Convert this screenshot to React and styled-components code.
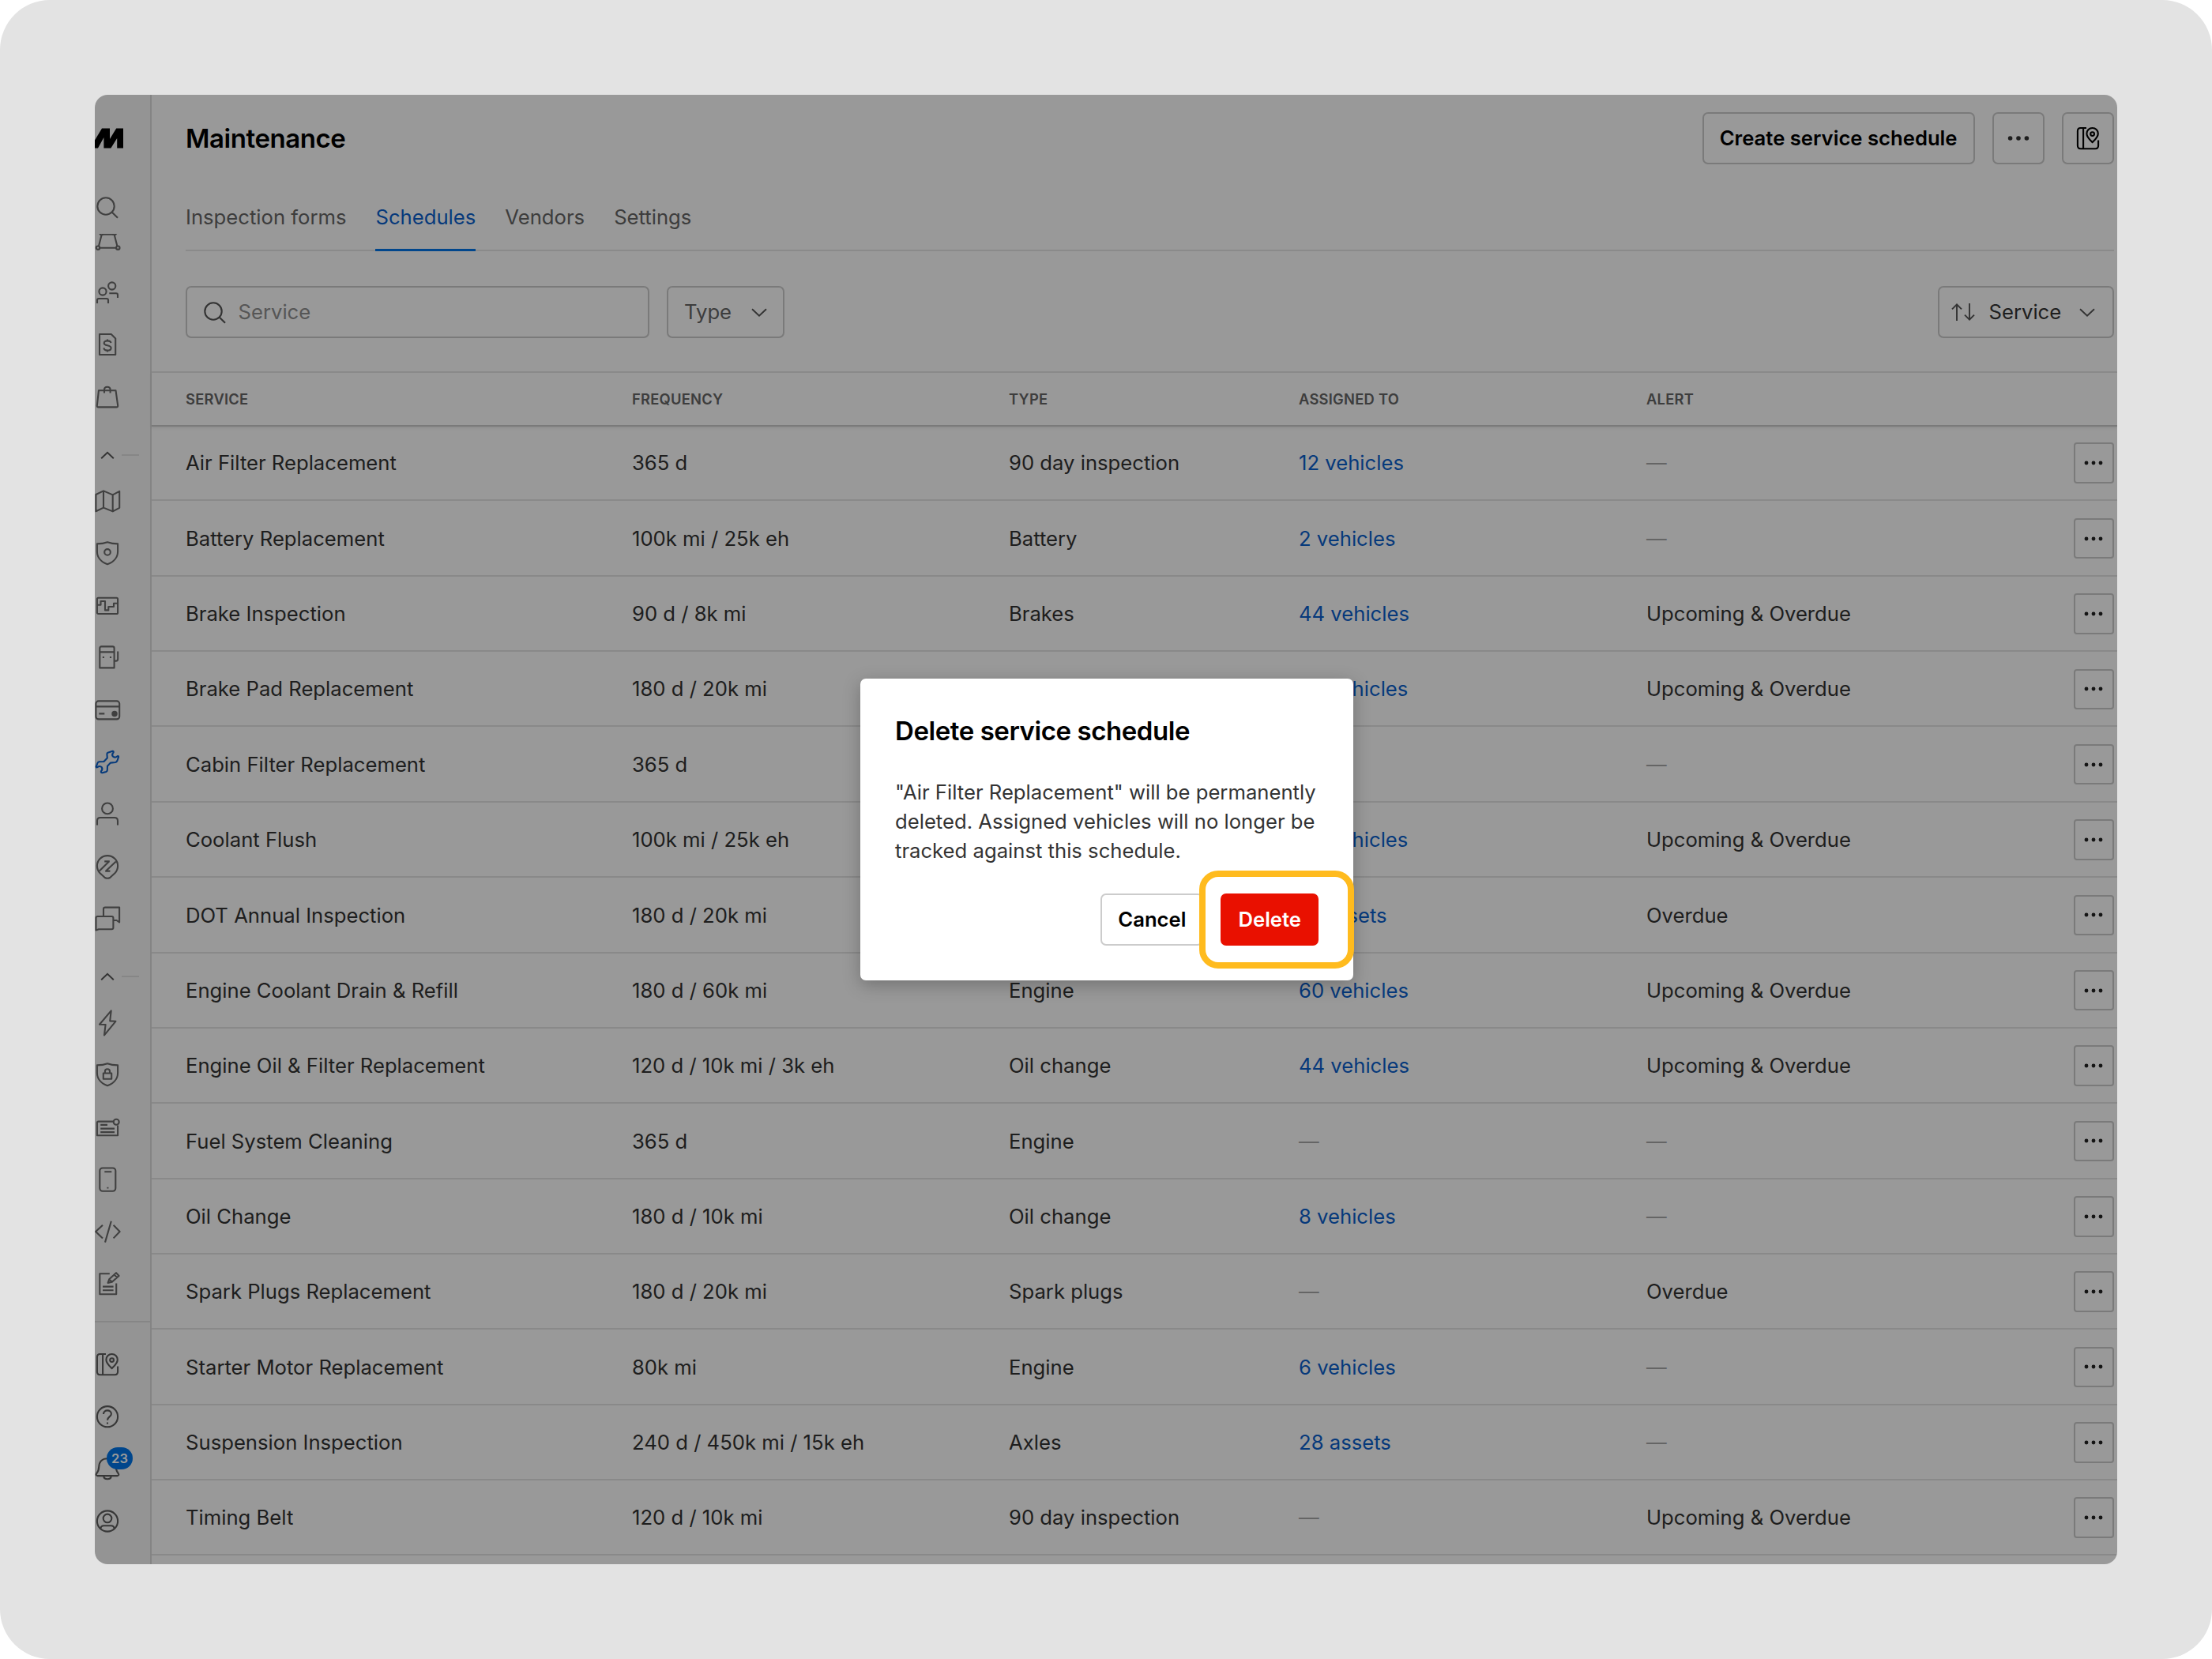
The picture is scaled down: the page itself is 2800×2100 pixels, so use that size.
import React from 'react';
import styled, { createGlobalStyle } from 'styled-components';

const dash = '—';

const tabs = ['Inspection forms', 'Schedules', 'Vendors', 'Settings'];

const columns = ['Service', 'Frequency', 'Type', 'Assigned to', 'Alert'];

const schedules = [
  { service: 'Air Filter Replacement', frequency: '365 d', type: '90 day inspection', assigned: '12 vehicles' },
  { service: 'Battery Replacement', frequency: '100k mi / 25k eh', type: 'Battery', assigned: '2 vehicles' },
  { service: 'Brake Inspection', frequency: '90 d / 8k mi', type: 'Brakes', assigned: '44 vehicles', alert: 'Upcoming & Overdue' },
  { service: 'Brake Pad Replacement', frequency: '180 d / 20k mi', type: 'Brakes', assigned: '28 vehicles', alert: 'Upcoming & Overdue' },
  { service: 'Cabin Filter Replacement', frequency: '365 d', type: 'Engine' },
  { service: 'Coolant Flush', frequency: '100k mi / 25k eh', type: 'Engine', assigned: '28 vehicles', alert: 'Upcoming & Overdue' },
  { service: 'DOT Annual Inspection', frequency: '180 d / 20k mi', type: 'Inspection', assigned: '18 assets', alert: 'Overdue' },
  { service: 'Engine Coolant Drain & Refill', frequency: '180 d / 60k mi', type: 'Engine', assigned: '60 vehicles', alert: 'Upcoming & Overdue' },
  { service: 'Engine Oil & Filter Replacement', frequency: '120 d / 10k mi / 3k eh', type: 'Oil change', assigned: '44 vehicles', alert: 'Upcoming & Overdue' },
  { service: 'Fuel System Cleaning', frequency: '365 d', type: 'Engine' },
  { service: 'Oil Change', frequency: '180 d / 10k mi', type: 'Oil change', assigned: '8 vehicles' },
  { service: 'Spark Plugs Replacement', frequency: '180 d / 20k mi', type: 'Spark plugs', alert: 'Overdue' },
  { service: 'Starter Motor Replacement', frequency: '80k mi', type: 'Engine', assigned: '6 vehicles' },
  { service: 'Suspension Inspection', frequency: '240 d / 450k mi / 15k eh', type: 'Axles', assigned: '28 assets' },
  { service: 'Timing Belt', frequency: '120 d / 10k mi', type: '90 day inspection', alert: 'Upcoming & Overdue' },
];

const shieldPath = 'M18 4.3C13.5 6 9 6.4 4.9 6.4V16C4.9 23.5 10 29.5 18 32.2C26 29.5 31.1 23.5 31.1 16V6.4C27 6.4 22.5 6 18 4.3Z';

const icons = {
  search: <><circle cx="16" cy="17" r="10.7" /><path d="M23.6 24.6L31 31.8" /></>,
  geofence: (
    <>
      <circle cx="6" cy="27.7" r="2.2" /><circle cx="31.3" cy="27.7" r="2.2" />
      <circle cx="10.6" cy="8.8" r="2.4" /><circle cx="26.8" cy="8.8" r="2.4" />
      <path d="M8.2 27.7H29M7 25.4L10.6 11.4M30.4 25.4L26.8 11.4M12 10.6H25.4" />
    </>
  ),
  users: (
    <>
      <circle cx="12" cy="17" r="4.6" /><circle cx="23.7" cy="10" r="4.6" />
      <path d="M5 32V28Q5 26 7 26H17Q19 26 19 28V32M20.3 19.3H29Q31 19.3 31 21.3V25" />
    </>
  ),
  invoice: (
    <>
      <path d="M8 5H22.7L28.2 10.5V31H8Z" />
      <path d="M22.4 16.2C22.2 14.2 20.4 13.4 18 13.4S13.7 14.4 13.7 16.4C13.7 20.2 22.6 18.4 22.6 22.4C22.6 24.6 20.5 25.6 18 25.6S13.6 24.6 13.4 22.4M18 11.4V13.4M18 25.6V27.6" />
    </>
  ),
  bag: <path d="M7 10.2H28.5L31.2 29.5Q31.3 31.4 29.4 31.4H6.6Q4.7 31.4 4.8 29.5ZM14 13.6V9.4C14 4.6 21.6 4.6 21.6 9.4V13.6" />,
  map: <path d="M3.4 10L13 5.4L24.7 10.4L33.2 5.8V26.8L24.7 31.4L13 26.6L3.4 31.2ZM13 5.4V26.6M24.7 10.4V31.4" />,
  shield: <><path d={shieldPath} /><circle cx="18" cy="16.9" r="3.8" /></>,
  activity: (
    <>
      <rect x="4.9" y="8.7" width="26.2" height="20.3" rx="1.6" />
      <path d="M5 17.7H9.5V13H15V24.4H19.3V20H26V15.7H31" />
    </>
  ),
  fuel: (
    <>
      <path d="M8.3 31.4V6.4Q8.3 4.4 10.3 4.4H24.6Q26.6 4.4 26.6 6.4V31.4ZM8.3 11.4H26.6M31.2 10.4V20.2Q31.2 22.6 28.8 22.6H26.8" />
      <path d="M12.9 17V19M22 17V19" />
    </>
  ),
  card: (
    <>
      <rect x="3.4" y="7.4" width="29.8" height="23" rx="3.4" />
      <path d="M3.4 14.4H33.2M7.3 23.4H14.3" />
      <circle cx="27" cy="23.4" r="2.7" fill="currentColor" />
    </>
  ),
  wrench: (
    <path d="M24.5 4.8L18.5 6.8Q17.4 7.2 17.4 8.4L17.8 13.5L13.5 18L7.5 18.2Q6 18.4 5.4 20L3.7 24.6Q4 25.9 5.3 25.1Q8.5 22.8 10.8 25.3Q12.4 27.5 9.9 30.4Q9.6 32.4 11.5 32.3L16.2 31Q17.8 30.4 17.8 29L18 23.8L21.8 19.6L28 19Q29.6 18.8 30.4 17L32.1 12.2Q32.1 10.5 30.6 11.2Q27.4 14 24.9 11.6Q23 9.4 25.6 6.4Q26 4.6 24.5 4.8Z" />
  ),
  user: <><circle cx="18" cy="11.4" r="6.9" /><path d="M5 32.6V27Q5 23 9 23H27Q31 23 31 27V32.6" /></>,
  route: (
    <>
      <path d="M14.8 33L8.6 27.3A13.1 13.1 0 1 1 27.4 27.3L21.2 33Q18 34.6 14.8 33Z" />
      <path d="M7.8 24.6L20 12.4M16 24.4L28.8 12.4M14.2 12.4H20.8M15.2 24.6H21.4" />
    </>
  ),
  messages: (
    <>
      <path d="M13 15.6V6.6Q13 4.6 15 4.6H33.1V23.4L29.6 21H25.7" />
      <path d="M3.5 33.4V18Q3.5 16 5.5 16H23.4Q25.4 16 25.4 18V30.2Q25.4 32.2 23.4 32.2H7Z" />
    </>
  ),
  bolt: <path d="M22.7 3.4L21.2 16.4L28.4 16.8L14 34.4L15.6 21L8 20.7Z" />,
  shieldLock: (
    <>
      <path d={shieldPath} />
      <rect x="12.8" y="16.5" width="10.4" height="7.2" />
      <path d="M14.9 16.4V14.2C14.9 10.2 21 10.2 21 14.2V16.4" />
    </>
  ),
  news: (
    <>
      <path d="M25.6 11.6H6.6Q4.9 11.6 4.9 13.3V29.2H31.1V16.4" />
      <circle cx="29.2" cy="12.3" r="3.5" />
      <path d="M9.2 15.9H18M9.2 20.6H27M9.2 25.1H27" />
    </>
  ),
  phone: (
    <>
      <rect x="8.3" y="4.5" width="20" height="29.2" rx="3.6" />
      <path d="M14.3 9.2H23.3M18.4 28.8V30.6" />
    </>
  ),
  code: <path d="M12 10.7L3.2 19L12 27.4M22.8 5.8L15 32.6M25.6 10.7L33.6 19L25.6 27.4" />,
  form: (
    <>
      <path d="M20.8 6.2H8.3V32.2H29.2V18.6M12 22.6H25.6M12 27.3H25.6" />
      <path d="M18.6 17.9L20.2 13.3L29 5.2L32.6 8.9L23.8 16.8ZM20.2 13.3L23.8 16.8M26.6 7.4L30.2 11.2" />
    </>
  ),
  mapPin: (
    <>
      <path d="M16 5H8.6Q4.9 5 4.9 9V27.3Q4.9 31.2 8.8 31.2H27.2Q31.1 31.2 31.1 27.3V20.6M12.1 5V31.2" />
      <path d="M23.6 23.2C20 19.6 16.4 16.4 16.4 12.2A7.2 7.2 0 0 1 30.8 12.2C30.8 16.4 27.2 19.6 23.6 23.2Z" />
      <circle cx="23.6" cy="12.6" r="2.4" />
    </>
  ),
  help: (
    <>
      <circle cx="18" cy="18.2" r="13.1" />
      <path d="M13 15C13 8.9 22.9 8.9 22.9 14.8C22.9 18.2 18 18.2 18 22.8M18 25.5V27.4" />
    </>
  ),
  bell: <path d="M5.2 27.1Q2.8 26.4 4.2 24.2Q7 21 7.2 16C7.4 9 11.6 5.2 18 5.2S28.6 9 28.8 16Q29 21 31.8 24.2Q33.2 26.4 30.8 27.1ZM13.2 27.4C13.6 32.6 22.4 32.6 22.8 27.4" />,
  account: (
    <>
      <circle cx="18" cy="18.5" r="13.1" />
      <circle cx="18" cy="14.9" r="5.3" />
      <path d="M9.2 28.2C9.6 25 11 24.2 13.4 24.2H22.6C25 24.2 26.4 25 26.8 28.2" />
    </>
  ),
};

const Icon = ({ name }) => (
  <IconSvg viewBox="0 0 36 36">{icons[name]}</IconSvg>
);

const Chevron = ({ up }) => (
  <ChevronSvg viewBox="0 0 20 11">
    <path d={up ? 'M2.2 9.2L10 1.7L17.8 9.2' : 'M1 1.2L10 9.6L19 1.2'} />
  </ChevronSvg>
);

const Dots = ({ small }) => (
  <DotsSvg viewBox="0 0 30 6" $small={small}>
    <circle cx="4.6" cy="3" r="2.8" />
    <circle cx="15" cy="3" r="2.8" />
    <circle cx="25.4" cy="3" r="2.8" />
  </DotsSvg>
);

const NavGroup = ({ items, active }) => items.map(name => (
  <NavItem key={name} $active={name === active}><Icon name={name} /></NavItem>
));

function Sidebar() {
  return (
    <SidebarWrap>
      <Brand>
        <svg viewBox="0 0 44 26">
          <path d="M0 25.5L15 .5H25V14L33.2 .5H42V25.5H34.2V13L26.4 25.5H17.4V12L10 25.5Z" />
        </svg>
      </Brand>
      <NavItem><Icon name="search" /></NavItem>
      <NavScroll>
        <NavGroup items={['geofence', 'users', 'invoice', 'bag']} />
        <NavDivider><Chevron up /><hr /></NavDivider>
        <NavGroup
          items={['map', 'shield', 'activity', 'fuel', 'card', 'wrench', 'user', 'route', 'messages']}
          active="wrench"
        />
        <NavDivider><Chevron up /><hr /></NavDivider>
        <NavGroup items={['bolt', 'shieldLock', 'news', 'phone', 'code', 'form']} />
      </NavScroll>
      <NavFooter>
        <NavItem><Icon name="mapPin" /></NavItem>
        <NavItem><Icon name="help" /></NavItem>
        <NavItem><Icon name="bell" /><Badge>23</Badge></NavItem>
        <NavItem><Icon name="account" /></NavItem>
      </NavFooter>
    </SidebarWrap>
  );
}

function DeleteModal() {
  return (
    <Overlay>
      <Modal>
        <h2>Delete service schedule</h2>
        <p>
          "Air Filter Replacement" will be permanently deleted. Assigned vehicles will no longer be
          tracked against this schedule.
        </p>
        <ModalActions>
          <Button>Cancel</Button>
          <Button $danger>Delete</Button>
          <Highlight />
        </ModalActions>
      </Modal>
    </Overlay>
  );
}

export default function App() {
  return (
    <Canvas>
      <GlobalStyle />
      <Frame>
        <Sidebar />
        <Main>
          <TopBar>
            <Title>Maintenance</Title>
            <Button>Create service schedule</Button>
            <IconButton><Dots /></IconButton>
            <IconButton><Icon name="mapPin" /></IconButton>
          </TopBar>

          <Tabs>
            {tabs.map(tab => <Tab key={tab} $active={tab === 'Schedules'}>{tab}</Tab>)}
          </Tabs>

          <Filters>
            <SearchBox><Icon name="search" />Service</SearchBox>
            <TypeSelect>Type<Chevron /></TypeSelect>
            <SortSelect>
              <svg viewBox="0 0 30 22">
                <path d="M7 22V1.6M1 7.4L7 1.4L13 7.4M23 0V20.4M17 14.6L23 20.6L29 14.6" />
              </svg>
              Service
              <Chevron />
            </SortSelect>
          </Filters>

          <TableHead>
            {columns.map(column => <span key={column}>{column}</span>)}
          </TableHead>
          {schedules.map(({ service, frequency, type, assigned, alert }) => (
            <Row key={service}>
              <span>{service}</span>
              <span>{frequency}</span>
              <span>{type}</span>
              {assigned ? <Link>{assigned}</Link> : <Empty>{dash}</Empty>}
              {alert ? <span>{alert}</span> : <Empty>{dash}</Empty>}
              <RowButton><Dots small /></RowButton>
            </Row>
          ))}
        </Main>
        <DeleteModal />
      </Frame>
    </Canvas>
  );
}

const GlobalStyle = createGlobalStyle`
  * { box-sizing: border-box; }

  body {
    margin: 0;
    background: #fff;
    color: #333;
    font-family: Inter, "Liberation Sans", sans-serif;
    font-size: 25.67px;
    line-height: 36.67px;
  }
`

const Canvas = styled.div`
  width: 2800px;
  height: 2100px;
  padding: 120px;
  border-radius: 63px;
  background: #e3e3e3;
`

const Frame = styled.div`
  position: relative;
  display: flex;
  width: 2560px;
  height: 1860px;
  border-radius: 16px;
  overflow: hidden;
  background: #fff;
`

const IconSvg = styled.svg`
  width: 36px;
  height: 36px;
  flex: none;
  fill: none;
  stroke: currentColor;
  stroke-width: 2.1;
  stroke-linejoin: round;
`

const ChevronSvg = styled.svg`
  width: 20px;
  height: 11px;
  flex: none;
  fill: none;
  stroke: #555;
  stroke-width: 1.9;
`

const DotsSvg = styled.svg`
  width: ${p => (p.$small ? 26 : 30)}px;
  height: 6px;
  fill: ${p => (p.$small ? '#222' : '#333')};
`

/* sidebar */

const SidebarWrap = styled.nav`
  display: flex;
  flex-direction: column;
  width: 72px;
  flex: none;
  border-right: 2px solid #dcdcdc;
  background: #f7f7f7;
`

const Brand = styled.div`
  display: flex;
  align-items: center;
  height: 109px;
  padding-top: 1px;
  margin-left: -6px;

  svg{
    width: 44px;
    height: 26px;
    flex: none;
  }
`

const NavItem = styled.div`
  position: relative;
  display: flex;
  align-items: center;
  height: 66px;
  flex: none;
  margin-left: -2px;
  color: ${p => (p.$active ? '#0b61cd' : '#6c6c6c')};
`

const NavScroll = styled.div`
  height: 1377px;
  overflow: hidden;
  border-top: 1px solid #f7f7f7;

  ${NavItem}:first-child{
    margin-top: -25px;
  }

  ${NavItem}{
    margin-left: 0;
    left: -2px;
  }
`

const NavDivider = styled.div`
  display: flex;
  align-items: center;
  gap: 8px;
  height: 66px;
  padding: 16px 0 0 6px;

  hr{
    width: 22px;
    height: 2px;
    margin: 0;
    border: 0;
    background: #e0e0e0;
  }
`

const NavFooter = styled.div`
  padding-top: 20px;
  border-top: 2px solid #e0e0e0;

  ${NavItem}{
    color: #5c5c5c;
  }
`

const Badge = styled.span`
  position: absolute;
  left: 17px;
  top: 6px;
  width: 33px;
  height: 28px;
  border-radius: 14px;
  background: #0076ea;
  color: #fff;
  font-size: 16.5px;
  font-weight: 600;
  line-height: 28px;
  text-align: center;
`

/* page */

const Main = styled.main`
  flex: 1;
`

const TopBar = styled.header`
  display: flex;
  align-items: center;
  gap: 22px;
  height: 110px;
  padding: 0 4.5px 0 43px;
`

const Title = styled.h1`
  margin: 0 auto 0 0;
  padding-top: 1px;
  color: #000;
  font-size: 33px;
  font-weight: 600;
  letter-spacing: -0.43px;
`

const Button = styled.button`
  height: 66px;
  padding: 1px 20px 0;
  border: 2px solid ${p => (p.$danger ? '#e91000' : '#ccc')};
  border-radius: 7px;
  background: ${p => (p.$danger ? '#e91000' : '#fff')};
  color: ${p => (p.$danger ? '#fff' : '#000')};
  font: inherit;
  font-weight: 600;
`

const IconButton = styled(Button)`
  display: flex;
  align-items: center;
  justify-content: center;
  width: 66px;
  padding: 0;
`

const Tabs = styled.div`
  display: flex;
  gap: 37px;
  height: 88px;
  margin: 0 4px 0 43px;
  box-shadow: inset 0 -2px #e6e6e6;
`

const Tab = styled.div`
  padding-top: 1px;
  line-height: 88px;
  height: 88px;
  color: ${p => (p.$active ? '#0b5fcd' : '#666')};
  box-shadow: ${p => (p.$active ? 'inset 0 -3px #0076e9' : 'none')};
`

const Filters = styled.div`
  display: flex;
  gap: 22px;
  padding: 44px 4px 42px 43px;
`

const Field = styled.div`
  display: flex;
  align-items: center;
  height: 66px;
  border: 2px solid #ccc;
  border-radius: 7px;
`

const SearchBox = styled(Field)`
  width: 587px;
  padding-left: 17px;
  gap: 11.5px;
  color: #909090;

  svg{
    color: #555;
  }
`

const TypeSelect = styled(Field)`
  width: 148.5px;
  justify-content: space-between;
  padding: 0 20px;
  color: #666;
`

const SortSelect = styled(Field)`
  width: 223.5px;
  margin-left: auto;
  padding-left: 15px;
  gap: 18px;

  svg:first-child{
    width: 30px;
    height: 22px;
    fill: none;
    stroke: #555;
    stroke-width: 1.9;
  }

  svg:last-child{
    margin-left: 5px;
  }
`

const TableHead = styled.div`
  position: relative;
  display: grid;
  grid-template-columns: 565px 477px 367px 440px 1fr;
  align-items: center;
  height: 70px;
  margin-bottom: -1px;
  padding-left: 43px;
  border-top: 2px solid #e6e6e6;
  border-bottom: 2px solid #ccc;
  box-shadow: 0 2px 3px rgba(0, 0, 0, 0.08);
  color: #666;
  font-size: 18.34px;
  font-weight: 600;
  letter-spacing: 0.25px;
  text-transform: uppercase;
`

const Row = styled.div`
  display: grid;
  grid-template-columns: 565px 477px 367px 440px 1fr 51.5px;
  align-items: center;
  height: 95.36px;
  padding: 1px 4px 0 43px;
  border-bottom: 2px solid #e4e4e4;

  span{
    padding-top: 1px;
  }
`

const Link = styled.span`
  color: #0b5fcd;
`

const Empty = styled.span`
  color: #a8a8a8;
`

const RowButton = styled.button`
  grid-column: 6;
  display: flex;
  align-items: center;
  justify-content: center;
  width: 51.5px;
  height: 51.5px;
  padding: 0;
  border: 2px solid #ccc;
  border-radius: 4px;
  background: #fff;
`

/* modal */

const Overlay = styled.div`
  position: absolute;
  inset: 0;
  display: flex;
  align-items: center;
  justify-content: center;
  padding: 0.5px 0 0 2px;
  background: rgba(0, 0, 0, 0.4);
`

const Modal = styled.div`
  width: 624px;
  height: 382px;
  padding: 44px;
  border-radius: 7px;
  background: #fff;
  box-shadow: 0 6px 22px rgba(0, 0, 0, 0.25);

  h2{
    margin: 0 0 38px;
    color: #000;
    font-size: 33px;
    font-weight: 600;
    line-height: 44px;
    letter-spacing: -0.43px;
  }

  p{
    margin: 0 0 36px;
  }
`

const ModalActions = styled.div`
  position: relative;
  display: flex;
  justify-content: flex-end;
  gap: 22px;
`

const Highlight = styled.div`
  position: absolute;
  top: -29px;
  right: -45px;
  width: 196px;
  height: 124px;
  border: 8px solid #ffbb1e;
  border-radius: 24px;
`
